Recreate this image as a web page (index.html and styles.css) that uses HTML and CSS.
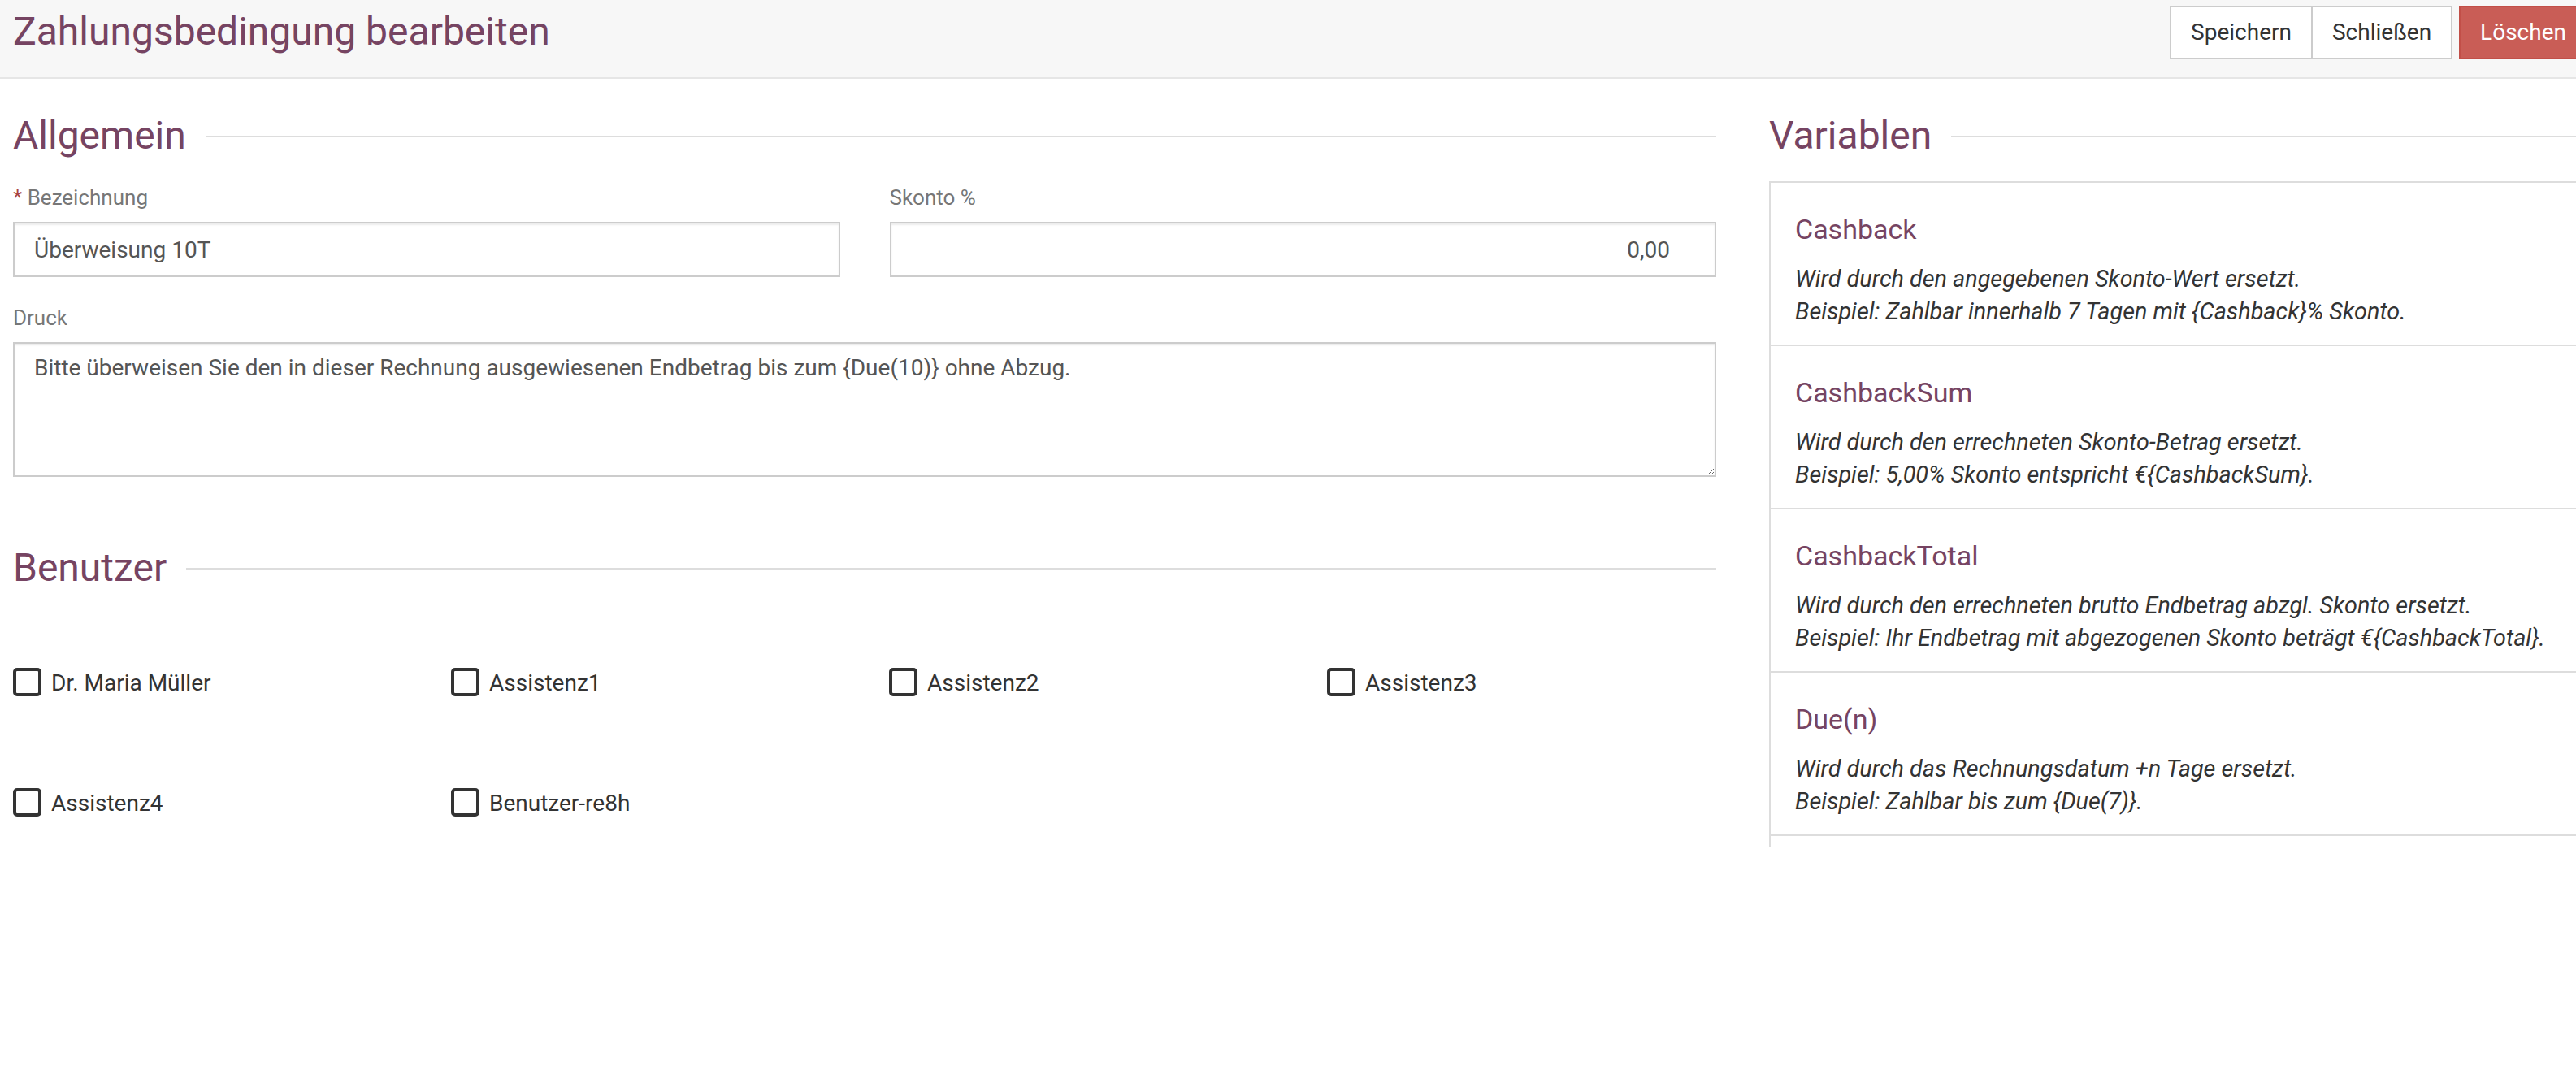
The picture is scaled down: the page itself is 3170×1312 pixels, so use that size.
FILE: index.html
```html
<!DOCTYPE html>
<html lang="de">
<head>
<meta charset="utf-8">
<title>Zahlungsbedingung bearbeiten</title>
<link rel="stylesheet" href="styles.css">
</head>
<body>
<header class="topbar">
  <h1 class="page-title">Zahlungsbedingung bearbeiten</h1>
  <div class="actions">
    <div class="btn-group">
      <button class="btn" type="button">Speichern</button>
      <button class="btn" type="button">Schließen</button>
    </div>
    <button class="btn btn-danger" type="button">Löschen</button>
  </div>
</header>

<main class="main">
  <section class="col-left">
    <h2 class="section-title">Allgemein</h2>

    <div class="form-row">
      <div class="field">
        <label class="label"><span class="req">*</span> Bezeichnung</label>
        <input class="input" type="text" value="Überweisung 10T">
      </div>
      <div class="field">
        <label class="label">Skonto %</label>
        <input class="input input-num" type="text" value="0,00">
      </div>
    </div>

    <div class="field field-druck">
      <label class="label">Druck</label>
      <textarea class="input textarea">Bitte überweisen Sie den in dieser Rechnung ausgewiesenen Endbetrag bis zum {Due(10)} ohne Abzug.</textarea>
    </div>

    <h2 class="section-title section-users">Benutzer</h2>

    <div class="users">
      <label class="user"><input class="check" type="checkbox"><span>Dr. Maria Müller</span></label>
      <label class="user"><input class="check" type="checkbox"><span>Assistenz1</span></label>
      <label class="user"><input class="check" type="checkbox"><span>Assistenz2</span></label>
      <label class="user"><input class="check" type="checkbox"><span>Assistenz3</span></label>
      <label class="user"><input class="check" type="checkbox"><span>Assistenz4</span></label>
      <label class="user"><input class="check" type="checkbox"><span>Benutzer-re8h</span></label>
    </div>
  </section>

  <aside class="col-right">
    <h2 class="section-title">Variablen</h2>
    <div class="var-list">
      <div class="var-item">
        <h3 class="var-name">Cashback</h3>
        <p class="var-desc">Wird durch den angegebenen Skonto-Wert ersetzt.<br>Beispiel: Zahlbar innerhalb 7 Tagen mit {Cashback}% Skonto.</p>
      </div>
      <div class="var-item">
        <h3 class="var-name">CashbackSum</h3>
        <p class="var-desc">Wird durch den errechneten Skonto-Betrag ersetzt.<br>Beispiel: 5,00% Skonto entspricht €{CashbackSum}.</p>
      </div>
      <div class="var-item">
        <h3 class="var-name">CashbackTotal</h3>
        <p class="var-desc">Wird durch den errechneten brutto Endbetrag abzgl. Skonto ersetzt.<br>Beispiel: Ihr Endbetrag mit abgezogenen Skonto beträgt €{CashbackTotal}.</p>
      </div>
      <div class="var-item">
        <h3 class="var-name">Due(n)</h3>
        <p class="var-desc">Wird durch das Rechnungsdatum +n Tage ersetzt.<br>Beispiel: Zahlbar bis zum {Due(7)}.</p>
      </div>
    </div>
  </aside>
</main>
</body>
</html>
```

FILE: styles.css
```css
* {
  box-sizing: border-box;
}

html,
body {
  margin: 0;
  padding: 0;
  overflow: hidden;
  background: #ffffff;
}

body {
  font-family: Roboto, "Noto Sans", "Liberation Sans", sans-serif;
  color: #333333;
  width: 3170px;
  height: 1312px;
}

/* ---------- top bar ---------- */
.topbar {
  display: flex;
  justify-content: space-between;
  align-items: flex-start;
  height: 97px;
  padding: 7px 0 0 16px;
  background: #f7f7f7;
  border-bottom: 2px solid #e6e6e6;
}

.page-title {
  margin: 4px 0 0 0;
  font-size: 48px;
  line-height: 56px;
  font-weight: 400;
  color: #764462;
}

.actions {
  display: flex;
  gap: 8px;
  margin-right: -14px;
}

.btn-group {
  display: flex;
}

.btn-group .btn + .btn {
  margin-left: -2px;
}

.btn {
  font-family: inherit;
  font-size: 28px;
  line-height: 40px;
  height: 66px;
  padding: 11px 24px;
  border: 2px solid #cccccc;
  background: #ffffff;
  color: #333333;
  border-radius: 0;
  cursor: pointer;
}

.btn-danger {
  background: #c95d56;
  border-color: #c24f48;
  color: #ffffff;
}

/* ---------- layout ---------- */
.main {
  display: grid;
  grid-template-columns: 2096px 1010px;
  column-gap: 65px;
  padding: 42px 0 0 16px;
}

.section-title {
  display: flex;
  align-items: center;
  gap: 24px;
  margin: 0;
  font-size: 48px;
  line-height: 56px;
  font-weight: 400;
  color: #764462;
}

.section-title::after {
  content: "";
  flex: 1;
  height: 2px;
  margin-top: 2px;
  background: #dddddd;
}

/* ---------- form ---------- */
.form-row {
  display: grid;
  grid-template-columns: 1fr 1fr;
  column-gap: 61px;
  margin-top: 30px;
}

.field {
  display: flex;
  flex-direction: column;
}

.label {
  font-size: 26px;
  line-height: 36px;
  color: #777777;
  margin-bottom: 12px;
}

.req {
  color: #a94442;
}

.input {
  font-family: inherit;
  font-size: 28px;
  line-height: 40px;
  height: 68px;
  padding: 12px 24px;
  color: #555555;
  background: #ffffff;
  border: 2px solid #cccccc;
  border-radius: 0;
  box-shadow: inset 0 2px 2px rgba(0, 0, 0, 0.075);
  outline: none;
}

.input-num {
  text-align: right;
  padding-right: 55px;
}

.field-druck {
  margin-top: 32px;
}

.textarea {
  height: 166px;
  padding: 10px 24px;
  resize: vertical;
}

.section-users {
  margin-top: 84px;
}

.users {
  display: grid;
  grid-template-columns: repeat(4, 1fr);
  column-gap: 60px;
  row-gap: 113px;
  margin-top: 95px;
}

.user {
  display: flex;
  align-items: center;
  height: 35px;
  font-size: 28px;
  line-height: 40px;
  color: #333333;
}

.user span {
  padding-top: 3px;
}

.check {
  appearance: none;
  -webkit-appearance: none;
  width: 35px;
  height: 35px;
  margin: 0 12px 0 0;
  border: 4px solid #333333;
  border-radius: 5px;
  background: #ffffff;
  flex: none;
}

/* ---------- variables panel ---------- */
.var-list {
  margin-top: 28px;
  border-top: 2px solid #dddddd;
  border-left: 2px solid #dddddd;
  padding-bottom: 14px;
}

.var-item {
  padding: 37px 30px 21px 30px;
  border-bottom: 2px solid #dddddd;
}

.var-name {
  margin: 0;
  font-size: 34px;
  line-height: 40px;
  font-weight: 400;
  color: #764462;
}

.var-desc {
  margin: 21px 0 0 0;
  font-size: 28.8px;
  line-height: 40px;
  font-style: italic;
  color: #333333;
}
```
